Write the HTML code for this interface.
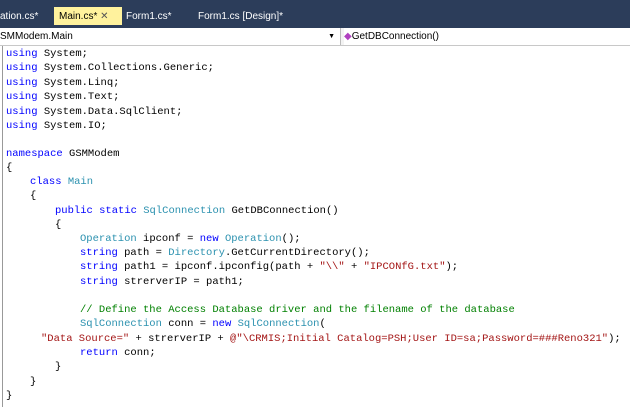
<!DOCTYPE html><html><head><style>
body{margin:0;width:630px;height:407px;overflow:hidden;background:#fff;position:relative;font-family:"Liberation Sans",sans-serif}
.tabs{position:absolute;left:0;top:0;width:630px;height:28px;background:#2c3d5a}
.tab{position:absolute;top:7px;font-size:10px;color:#fff;height:18px;line-height:19px}
.nav{position:absolute;top:28px;left:0;width:630px;height:17px;background:#f3f3f3;border-bottom:1px solid #c8c8c8;font-size:10px;line-height:17px}
.code{position:absolute;left:0;top:46px;font-family:"Liberation Mono",monospace;font-size:10.5px;color:#000;white-space:pre}
.l{position:absolute;height:14px;line-height:14px}
.k{color:#0000ff}.t{color:#2b91af}.s{color:#a31515}.c{color:#008000}
.gut{position:absolute;left:0;top:46px;width:2px;height:361px;border-right:1px solid #999}
</style></head><body>
<div class="tabs">
<div class="tab" style="left:0">ation.cs*</div>
<div class="tab" style="left:54px;width:68px;background:#fff29d;color:#000;padding-left:5px;box-sizing:border-box">Main.cs* <span style="color:#555">✕</span></div>
<div class="tab" style="left:126px">Form1.cs*</div>
<div class="tab" style="left:198px">Form1.cs [Design]*</div>
</div>
<div class="nav">
<div style="position:absolute;left:0;top:0;width:340px;height:17px;background:#fff;border-right:1px solid #bbb">SMModem.Main<span style="position:absolute;right:5px;font-size:7px">▼</span></div>
<div style="position:absolute;left:344px;top:0;background:#fff;width:286px;height:17px"><span style="color:#b040c0">◆</span>GetDBConnection()</div>
</div>
<div class="gut"></div>
<div class="code">
<div class="l" style="top:1px;left:6px"><span class="k">using</span> System;</div>
<div class="l" style="top:15px;left:6px"><span class="k">using</span> System.Collections.Generic;</div>
<div class="l" style="top:30px;left:6px"><span class="k">using</span> System.Linq;</div>
<div class="l" style="top:44px;left:6px"><span class="k">using</span> System.Text;</div>
<div class="l" style="top:59px;left:6px"><span class="k">using</span> System.Data.SqlClient;</div>
<div class="l" style="top:73px;left:6px"><span class="k">using</span> System.IO;</div>
<div class="l" style="top:101px;left:6px"><span class="k">namespace</span> GSMModem</div>
<div class="l" style="top:115px;left:6px">{</div>
<div class="l" style="top:129px;left:30px"><span class="k">class</span> <span class="t">Main</span></div>
<div class="l" style="top:143px;left:30px">{</div>
<div class="l" style="top:158px;left:55px"><span class="k">public</span> <span class="k">static</span> <span class="t">SqlConnection</span> GetDBConnection()</div>
<div class="l" style="top:172px;left:55px">{</div>
<div class="l" style="top:186px;left:80px"><span class="t">Operation</span> ipconf = <span class="k">new</span> <span class="t">Operation</span>();</div>
<div class="l" style="top:200px;left:80px"><span class="k">string</span> path = <span class="t">Directory</span>.GetCurrentDirectory();</div>
<div class="l" style="top:214px;left:80px"><span class="k">string</span> path1 = ipconf.ipconfig(path + <span class="s">"\\"</span> + <span class="s">"IPCONfG.txt"</span>);</div>
<div class="l" style="top:229px;left:80px"><span class="k">string</span> strerverIP = path1;</div>
<div class="l" style="top:257px;left:80px"><span class="c">// Define the Access Database driver and the filename of the database</span></div>
<div class="l" style="top:271px;left:80px"><span class="t">SqlConnection</span> conn = <span class="k">new</span> <span class="t">SqlConnection</span>(</div>
<div class="l" style="top:286px;left:41px"><span class="s">"Data Source="</span> + strerverIP + <span class="s">@"\CRMIS;Initial Catalog=PSH;User ID=sa;Password=###Reno321"</span>);</div>
<div class="l" style="top:300px;left:80px"><span class="k">return</span> conn;</div>
<div class="l" style="top:314px;left:55px">}</div>
<div class="l" style="top:329px;left:30px">}</div>
<div class="l" style="top:343px;left:6px">}</div>
</div>
</body></html>
